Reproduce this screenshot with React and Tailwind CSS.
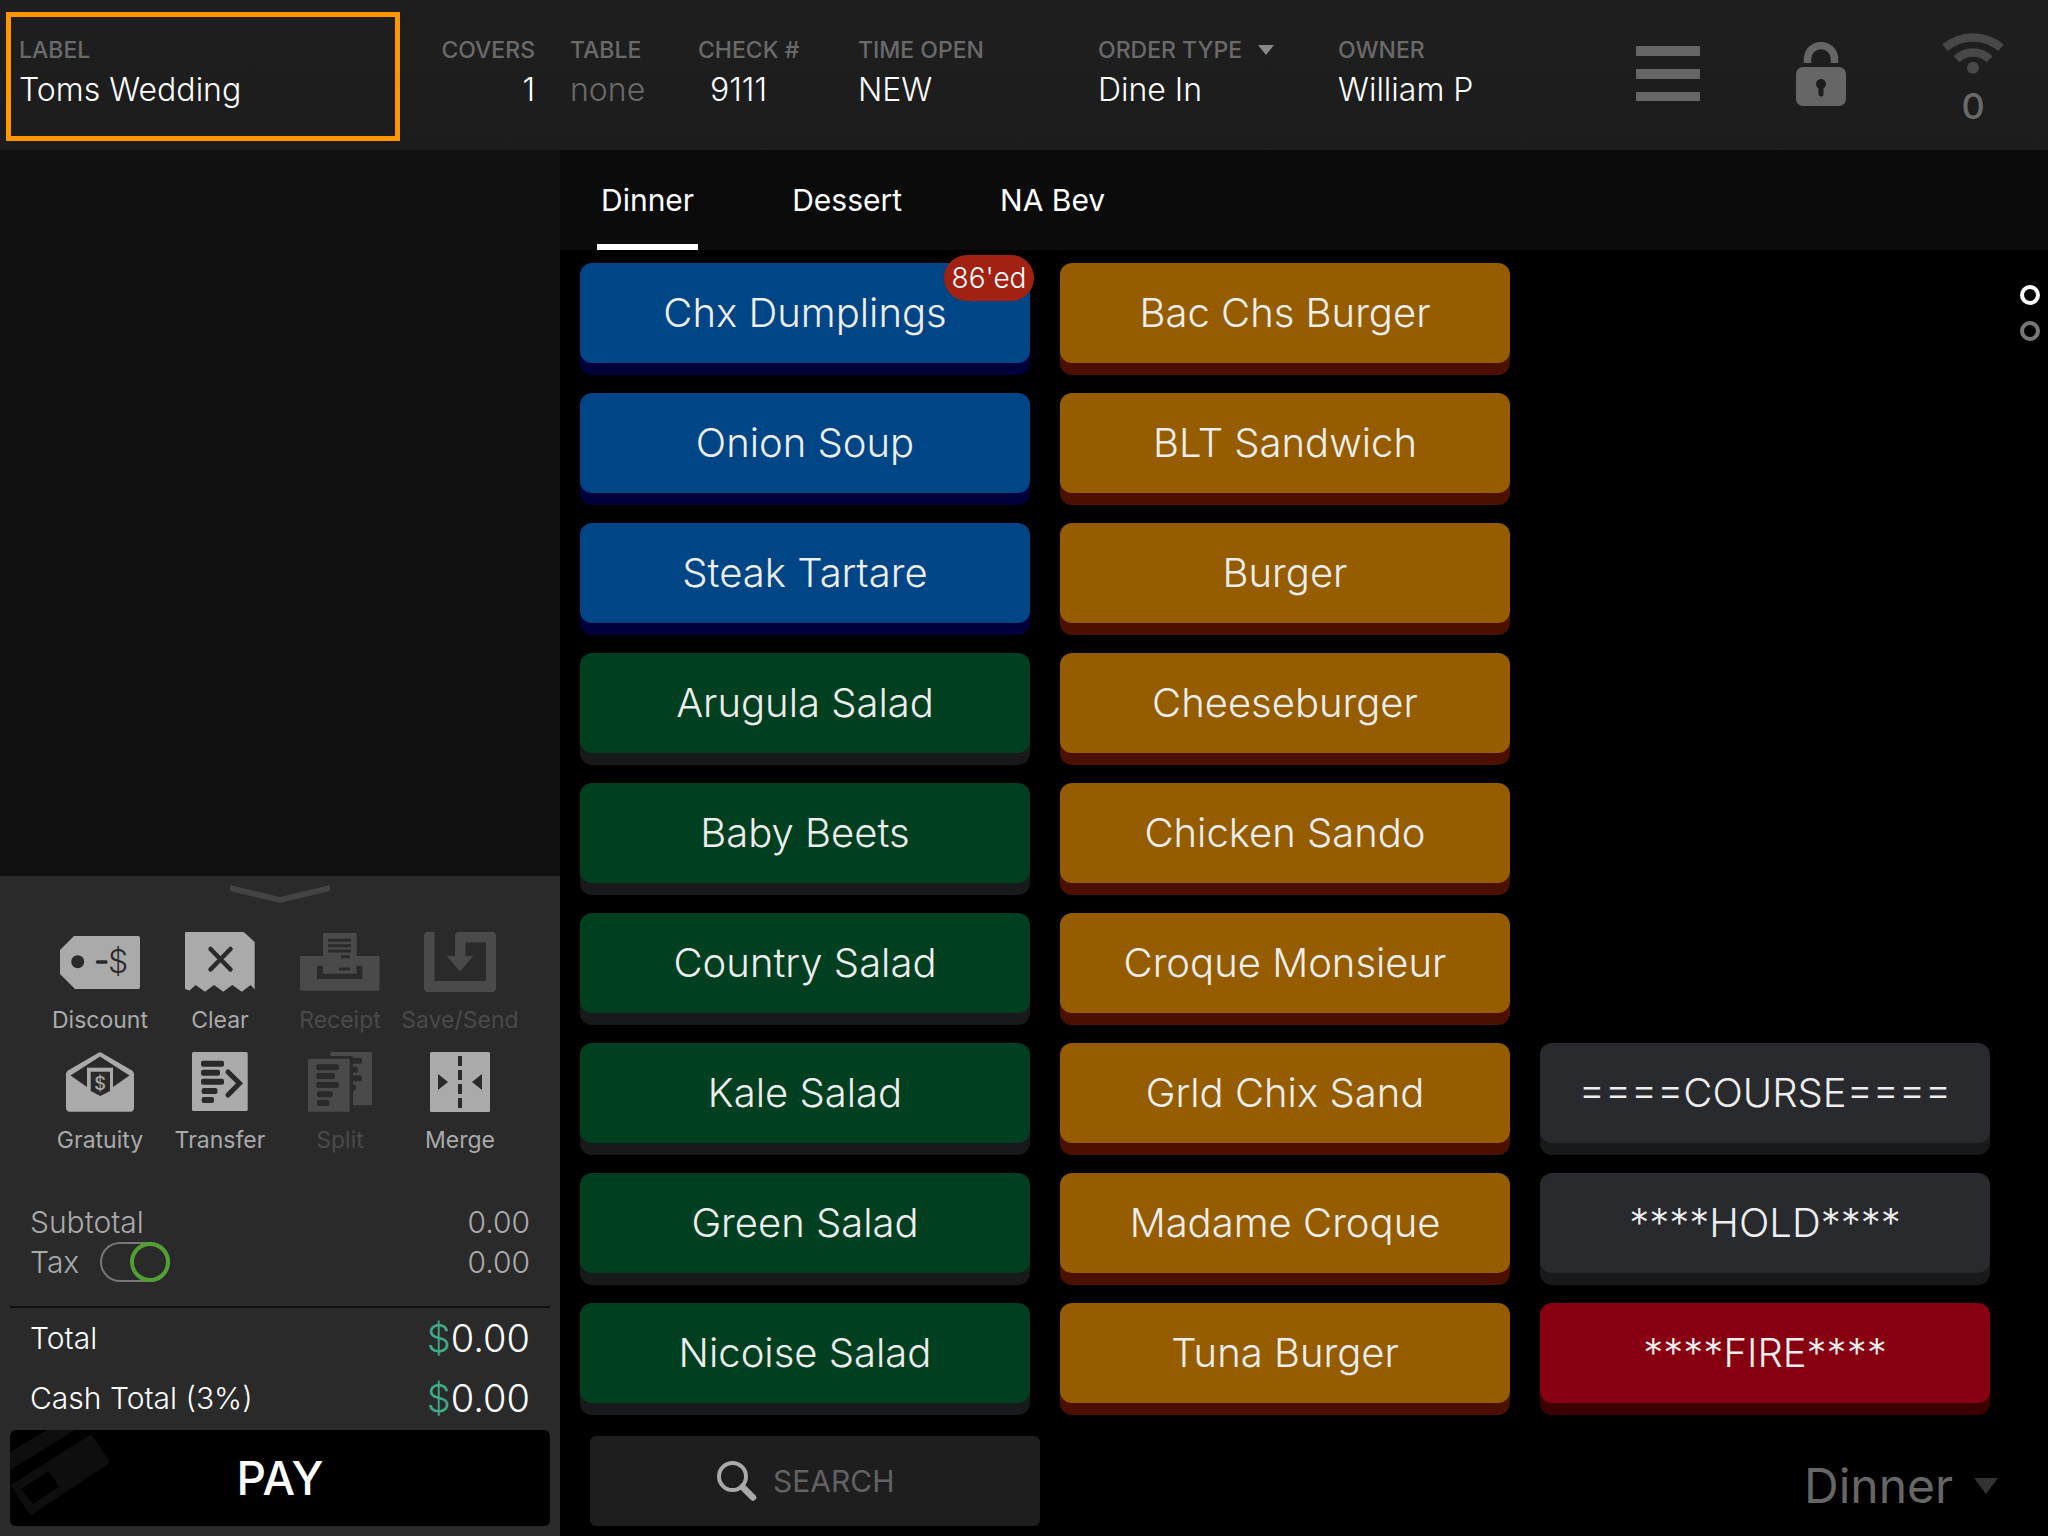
const LIGHT = "#aaaaaa";
const DIM = "#4a4a4a";
const PANEL = "#2a2a2a";

function Bars({ rows, fill = PANEL }) {
  return rows.map(([x1, x2, y]) => (
    <rect key={`${x1}-${y}`} x={x1} y={y - 3} width={x2 - x1} height="6" rx="2" fill={fill} />
  ));
}

function DiscountIcon() {
  return (
    <svg width="80" height="60" viewBox="0 0 80 60" aria-hidden="true">
      <path d="M14 4H78Q80 4 80 6V55Q80 57 78 57H15L0 42V18Z" fill={LIGHT} />
      <circle cx="17.7" cy="29.7" r="6.5" fill={PANEL} />
      <path d="M37.5 30H46" stroke={PANEL} strokeWidth="3.5" strokeLinecap="round" />
      <text x="58" y="41" textAnchor="middle" fontSize="32" fontWeight="300" fill={PANEL}>$</text>
    </svg>
  );
}

function ClearIcon() {
  return (
    <svg width="80" height="60" viewBox="0 0 80 60" aria-hidden="true">
      <path d="M5 1Q5 0 6 0H63.7L74.7 10V57.5L70.7 53L61.7 59.7L52.3 53L43.3 59.7L34 53L25 59.7L15.7 53L9.5 58.5L5 57Z" fill={LIGHT} />
      <path d="M30.5 17L50.5 37.5M50.5 17L30.5 37.5" stroke={PANEL} strokeWidth="4.5" strokeLinecap="round" />
    </svg>
  );
}

function ReceiptIcon() {
  return (
    <svg width="80" height="60" viewBox="0 0 80 60" aria-hidden="true">
      <path d="M0 24H79.5V58.7H0Z" fill={DIM} />
      <path d="M17 33.7H62.3V47H17Z" fill={PANEL} />
      <path d="M23 1H56.7V41.7H23Z" fill={DIM} />
      <path d="M28 8.3H51M28 13.7H51M28 19H51M41 24.7H50M39 37H50" stroke={PANEL} strokeWidth="3" />
    </svg>
  );
}

function SaveIcon() {
  return (
    <svg width="80" height="60" viewBox="0 0 80 60" aria-hidden="true">
      <path d="M4 4Q4 0 8 0H14.5V49H66V10.5H45.5V24H53.3L40 39.5L26.7 24H35V4Q35 0 39 0H72Q76 0 76 4V56Q76 60 72 60H8Q4 60 4 56Z" fill={DIM} />
    </svg>
  );
}

function GratuityIcon() {
  return (
    <svg width="80" height="60" viewBox="0 0 80 60" aria-hidden="true">
      <path d="M38.5 .7Q40 -.3 41.5 .7L72 18.5Q74 20 74 22V56Q74 59.7 70 59.7H10Q6 59.7 6 56V22Q6 20 8 18.5Z" fill={LIGHT} />
      <path d="M40 4.5L69.5 23.5L53 35H27L10.5 23.5Z" fill={PANEL} />
      <path d="M27 15.7H53V44H27Z" fill={LIGHT} />
      <path d="M30.7 19.7H50V39L40.3 44L30.7 39Z" fill={PANEL} />
      <text x="40" y="38" textAnchor="middle" fontSize="18" fontWeight="500" fill={LIGHT}>$</text>
    </svg>
  );
}

function TransferIcon() {
  return (
    <svg width="80" height="60" viewBox="0 0 80 60" aria-hidden="true">
      <rect x="12" width="55.7" height="59" rx="1.5" fill={LIGHT} />
      <Bars rows={[[21, 44, 11.7], [21, 40, 20.7], [21, 44, 29.7], [21.7, 37.5, 39], [21.7, 34, 48]]} />
      <path d="M48 20L59.5 31.3L48 43" fill="none" stroke={PANEL} strokeWidth="5" strokeLinecap="round" />
    </svg>
  );
}

function SplitIcon() {
  return (
    <svg width="80" height="60" viewBox="0 0 80 60" aria-hidden="true">
      <rect x="30.3" width="41.7" height="53.3" rx="1.5" fill={DIM} />
      <Bars rows={[[48, 62, 8.7], [48, 58, 17.7], [48, 62, 26.3], [48, 56, 35.7]]} />
      <rect x="5" y="4" width="48" height="56" rx="1.5" fill={PANEL} />
      <rect x="8" y="6.7" width="41.7" height="53" rx="1.5" fill={DIM} />
      <Bars rows={[[16.3, 39, 15.3], [16.3, 35, 24], [16.3, 39, 33], [17, 32.7, 42.3], [17, 29.3, 51]]} />
    </svg>
  );
}

function MergeIcon() {
  return (
    <svg width="80" height="60" viewBox="0 0 80 60" aria-hidden="true">
      <rect x="10" width="60" height="60" rx="1.5" fill={LIGHT} />
      <path d="M40 4V56" stroke={PANEL} strokeWidth="4" strokeDasharray="10 4" />
      <path d="M18 22V38L28 30ZM62 22V38L52 30Z" fill={PANEL} />
    </svg>
  );
}

function Triangle({ className }) {
  return (
    <svg className={className} viewBox="0 0 16 10" preserveAspectRatio="none" fill="currentColor" aria-hidden="true">
      <path d="M0 0H16L8 10Z" />
    </svg>
  );
}

const ACTIONS = [
  { name: "Discount", Icon: DiscountIcon },
  { name: "Clear", Icon: ClearIcon },
  { name: "Receipt", Icon: ReceiptIcon, disabled: true },
  { name: "Save/Send", Icon: SaveIcon, disabled: true },
  { name: "Gratuity", Icon: GratuityIcon },
  { name: "Transfer", Icon: TransferIcon },
  { name: "Split", Icon: SplitIcon, disabled: true },
  { name: "Merge", Icon: MergeIcon },
];

const TONES = {
  blue: "bg-[#004586] shadow-[0_12px_0_#00003a]",
  green: "bg-[#004021] shadow-[0_12px_0_#18191b]",
  amber: "bg-[#965d00] shadow-[0_12px_0_#4b1000]",
  slate: "bg-[#292a2e] shadow-[0_12px_0_#18191b]",
  red: "bg-[#870011] shadow-[0_12px_0_#3c0000]",
};

const COLUMNS = [
  [
    ["Chx Dumplings", "blue", "86'ed"],
    ["Onion Soup", "blue"],
    ["Steak Tartare", "blue"],
    ["Arugula Salad", "green"],
    ["Baby Beets", "green"],
    ["Country Salad", "green"],
    ["Kale Salad", "green"],
    ["Green Salad", "green"],
    ["Nicoise Salad", "green"],
  ],
  [
    ["Bac Chs Burger", "amber"],
    ["BLT Sandwich", "amber"],
    ["Burger", "amber"],
    ["Cheeseburger", "amber"],
    ["Chicken Sando", "amber"],
    ["Croque Monsieur", "amber"],
    ["Grld Chix Sand", "amber"],
    ["Madame Croque", "amber"],
    ["Tuna Burger", "amber"],
  ],
  [
    ["====COURSE====", "slate"],
    ["****HOLD****", "slate"],
    ["****FIRE****", "red"],
  ],
];

function Field({ label, className, children }) {
  return (
    <div className={`flex flex-col gap-2 pt-[38px] ${className}`}>
      <div className="text-[23px] leading-6 font-medium text-[#6a6a6a]">{label}</div>
      <div className="text-[32px] leading-10 font-light">{children}</div>
    </div>
  );
}

function Header() {
  return (
    <header className="flex items-start bg-linear-to-b from-[#1f1f1f] to-[#1c1c1c] text-white whitespace-nowrap">
      <div className="mt-3 mb-[9px] ml-[6px] flex h-[129px] w-[394px] flex-col gap-2 border-[5px] border-[#ff9500] pt-[21px] pl-2">
        <label htmlFor="check-label" className="text-[23px] leading-6 font-medium text-[#6a6a6a]">LABEL</label>
        <input id="check-label" defaultValue="Toms Wedding" className="h-10 w-full bg-transparent text-[32px] leading-10 font-light outline-none" />
      </div>
      <Field label="COVERS" className="w-[135px] text-right">1</Field>
      <Field label="TABLE" className="ml-[35px] w-[128px]">
        <span className="text-[#6a6a6a]">none</span>
      </Field>
      <Field label="CHECK #" className="w-[160px]">
        <span className="pl-3">9111</span>
      </Field>
      <Field label="TIME OPEN" className="w-[240px]">NEW</Field>
      <div className="flex w-[240px] flex-col gap-2 pt-[38px]">
        <label htmlFor="order-type" className="flex items-center gap-4 text-[23px] leading-6 font-medium text-[#6a6a6a]">
          ORDER TYPE
          <Triangle className="h-[10px] w-4 text-[#888888]" />
        </label>
        <select id="order-type" className="h-10 w-full appearance-none bg-transparent text-[32px] leading-10 font-light outline-none">
          <option>Dine In</option>
        </select>
      </div>
      <Field label="OWNER" className="flex-1">William P</Field>
      <div className="flex items-start gap-24 pr-11">
        <button aria-label="Menu" className="mt-[46px]">
          <svg width="64" height="56" viewBox="0 0 64 56" fill="#666666" aria-hidden="true">
            <rect width="64" height="10" />
            <rect y="23" width="64" height="10" />
            <rect y="46" width="64" height="9" />
          </svg>
        </button>
        <button aria-label="Lock" className="mt-[42px]">
          <svg width="50" height="64" viewBox="0 0 50 64" aria-hidden="true">
            <path d="M11.5 21V17a13.5 13.5 0 0 1 27 0V21" fill="none" stroke="#666666" strokeWidth="7.5" />
            <rect y="25" width="50" height="39" rx="7" fill="#666666" />
            <circle cx="25" cy="42" r="5" fill="#1d1d1d" />
            <rect x="22.5" y="42" width="5" height="12.5" rx="2.5" fill="#1d1d1d" />
          </svg>
        </button>
        <div className="mt-[33px] flex flex-col items-center gap-3 text-4xl leading-10 font-medium text-[#6a6a6a]">
          <svg width="62" height="41" viewBox="0 0 62 41" aria-hidden="true">
            <g fill="none" stroke="#484848" strokeWidth="8.5">
              <path d="M3 14.8A43 43 0 0 1 59 14.8" />
              <path d="M14.5 26.2A23.5 23.5 0 0 1 47.5 26.2" />
            </g>
            <circle cx="31" cy="34.7" r="6" fill="#484848" />
          </svg>
          0
        </div>
      </div>
    </header>
  );
}

function Sidebar() {
  return (
    <aside className="flex w-[560px] shrink-0 flex-col bg-[#101010]">
      <div className="flex-1" />
      <div className="flex flex-col bg-[#2a2a2a] px-[10px] pt-[9px] pb-[10px]">
        <button aria-label="Collapse actions" className="self-center">
          <svg width="100" height="18" viewBox="0 0 100 18" aria-hidden="true">
            <path d="M0 0L50 12L100 0V6L50 18L0 6Z" fill="#444444" />
          </svg>
        </button>
        <div className="mx-[30px] mt-[29px] grid grid-cols-4 gap-y-5">
          {ACTIONS.map(({ name, Icon, disabled }) => (
            <button
              key={name}
              disabled={disabled}
              className="flex flex-col items-center gap-4 text-[23px] leading-6 whitespace-nowrap text-[#aaaaaa] disabled:text-[#4a4a4a]"
            >
              <Icon />
              {name}
            </button>
          ))}
        </div>
        <div className="mt-[50px] px-5 text-[30px] leading-10 font-light text-[#aaaaaa]">
          <div className="flex justify-between">
            <span>Subtotal</span>
            <span>0.00</span>
          </div>
          <div className="flex items-center">
            <label htmlFor="tax" className="w-[70px]">Tax</label>
            <input
              id="tax"
              type="checkbox"
              defaultChecked
              className="h-10 w-[70px] appearance-none rounded-full shadow-[inset_0_0_0_2px_#777777] before:block before:size-10 before:rounded-full before:border-4 before:border-[#777777] before:bg-[#2a2a2a] checked:before:ml-[30px] checked:before:border-[#53a032]"
            />
            <span className="ml-auto">0.00</span>
          </div>
        </div>
        <div className="mt-6 border-t-2 border-[#101010] px-5 text-[30px] leading-[60px] font-light text-white">
          {["Total", "Cash Total (3%)"].map((name) => (
            <div key={name} className="flex justify-between">
              <span>{name}</span>
              <span className="text-[38px] leading-[60px]">
                <span className="text-[#3fa98a]">$</span>0.00
              </span>
            </div>
          ))}
        </div>
        <button className="relative mt-[2px] h-24 overflow-hidden rounded-md bg-black text-[46px] leading-[60px] font-medium text-white">
          <svg className="absolute top-0 left-0" width="100" height="96" viewBox="0 0 100 96" fill="#0e0e0e" aria-hidden="true">
            <path d="M0 22L37 0H65L0 40Z" />
            <path fillRule="evenodd" d="M1 55L80 5Q81.500 4 82.500 6L99 31Q99.500 33 98 34L22 84.500Q20 85.500 19 84ZM11 59L22.700 74.500L49 56.500L39 41Z" />
          </svg>
          PAY
        </button>
      </div>
    </aside>
  );
}

function Menu() {
  return (
    <main className="flex flex-1 flex-col">
      <nav className="flex h-[100px] gap-[90px] bg-[#0b0b0b] pl-[37px] text-[30px] text-white">
        {["Dinner", "Dessert", "NA Bev"].map((name, i) => (
          <button
            key={name}
            aria-current={i === 0}
            className="border-y-6 border-transparent px-1 aria-[current=true]:border-b-white"
          >
            {name}
          </button>
        ))}
      </nav>
      <div className="flex flex-1 pt-[13px] pl-5">
        <div className="grid flex-1 grid-cols-3 gap-[30px]">
          {COLUMNS.map((items, c) => (
            <div key={c} className="flex flex-col justify-end gap-[30px] pb-3">
              {items.map(([name, tone, badge]) => (
                <button
                  key={name}
                  className={`relative h-[100px] rounded-xl text-[40px] font-light whitespace-nowrap text-[#eeeeee] ${TONES[tone]}`}
                >
                  {name}
                  {badge && (
                    <span className="absolute -top-2 -right-1 flex h-[46px] w-[90px] items-center justify-center rounded-full bg-[#a12212] text-[28px] text-white">
                      {badge}
                    </span>
                  )}
                </button>
              ))}
            </div>
          ))}
        </div>
        <div className="mr-2 ml-[30px] flex flex-col gap-4 pt-[22px]">
          <button aria-label="Page 1" className="size-5 rounded-full border-4 border-white" />
          <button aria-label="Page 2" className="size-5 rounded-full border-4 border-[#777777]" />
        </div>
      </div>
      <div className="flex items-end justify-between pt-[21px] pr-[50px] pb-[10px] pl-[30px]">
        <label className="flex h-[90px] w-[450px] items-center justify-center gap-4 rounded-md bg-[#1e1e1e]">
          <svg width="40" height="40" viewBox="0 0 40 40" fill="none" stroke="#aaaaaa" aria-hidden="true">
            <circle cx="15.500" cy="15.500" r="13.500" strokeWidth="4" />
            <path d="M25.500 26L36 36.500" strokeWidth="6.500" strokeLinecap="round" />
          </svg>
          <input
            type="text"
            aria-label="Search"
            placeholder="SEARCH"
            className="h-10 w-[140px] bg-transparent text-[30px] text-white outline-none placeholder:text-[#626262]"
          />
        </label>
        <label className="flex h-20 items-center gap-5 text-[#666666]">
          <select aria-label="Menu" className="h-[60px] appearance-none bg-transparent text-[48px] leading-[60px] outline-none">
            <option>Dinner</option>
          </select>
          <Triangle className="h-4 w-6 text-[#333333]" />
        </label>
      </div>
    </main>
  );
}

export default function App() {
  return (
    <div className="flex min-h-screen flex-col bg-black font-['Inter',sans-serif]">
      <Header />
      <div className="flex flex-1">
        <Sidebar />
        <Menu />
      </div>
    </div>
  );
}
